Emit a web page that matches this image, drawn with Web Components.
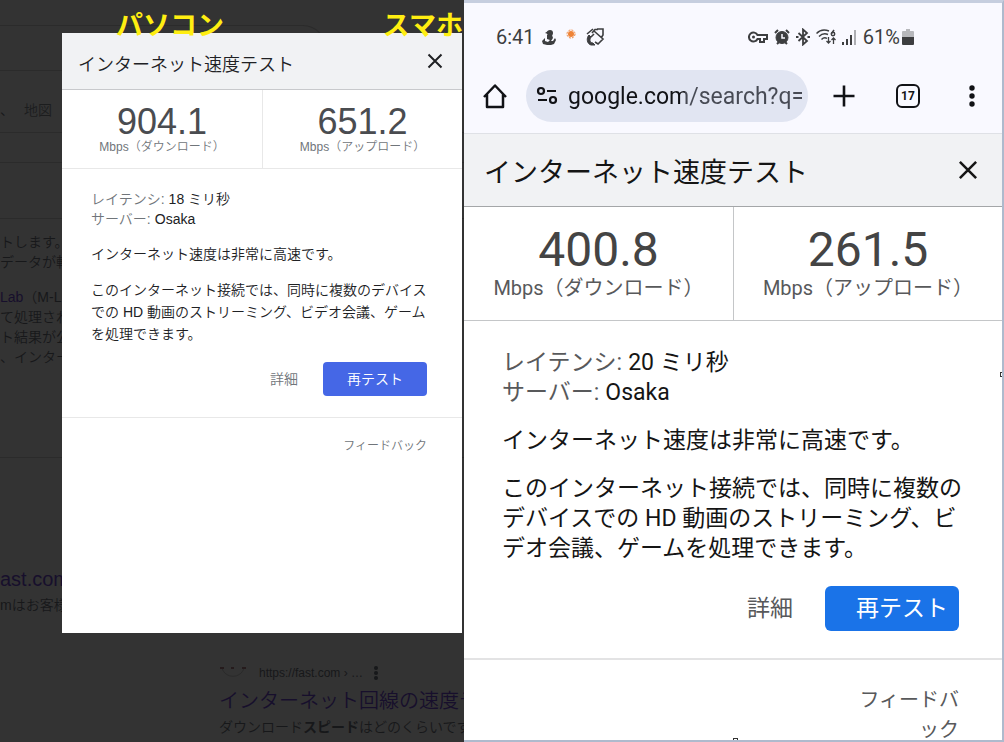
<!DOCTYPE html>
<html lang="ja">
<head>
<meta charset="utf-8">
<title>インターネット速度テスト</title>
<style>
  body {
    margin: 0;
    display: grid;
    grid-template-columns: 464fr 540fr;
    height: 100vh;
    overflow: hidden;
    background: #333333;
    font-family: "Liberation Sans", "Noto Sans CJK JP", sans-serif;
  }
</style>
</head>
<body>

<desktop-pane>
  <search-page slot="page"></search-page>
  <speed-panel slot="dialog" download="904.1" upload="651.2" latency="18"></speed-panel>
  <pane-caption slot="caption">パソコン</pane-caption>
  <pane-caption slot="caption" end>スマホ</pane-caption>
</desktop-pane>

<phone-pane>
  <status-bar slot="status"></status-bar>
  <browser-bar slot="toolbar" url="google.com/search?q=" tabs="17"></browser-bar>
  <speed-panel phone download="400.8" upload="261.5" latency="20"></speed-panel>
</phone-pane>

<script>
  const createTemplate = html => {
    const template = document.createElement('template');
    template.innerHTML = html;
    return template;
  };

  class BaseElement extends HTMLElement {
    constructor() {
      super();

      this._shadowRoot = this.attachShadow({ mode: 'open' });
      this._shadowRoot.appendChild(this.constructor.template.content.cloneNode(true));
    }
  }

  // Left half: dimmed search page with the dialog on top of it
  class DesktopPane extends BaseElement {
    static template = createTemplate(`
      <style>
        :host {
          display: block;
          position: relative;
          overflow: hidden;
          background: #333333;
        }

        .dialog {
          position: absolute;
          top: 33px;
          left: 62px;
          right: 2px;
          min-height: 600px;
          background: #ffffff;
        }
      </style>

      <slot name="page"></slot>
      <div class="dialog"><slot name="dialog"></slot></div>
      <slot name="caption"></slot>
    `);
  }

  // Yellow labels that float over the pane
  class PaneCaption extends BaseElement {
    static template = createTemplate(`
      <style>
        :host {
          position: absolute;
          top: 10px;
          left: 116px;
          font-size: 27px;
          line-height: 32px;
          font-weight: bold;
          white-space: nowrap;
          color: #ffee11;
        }

        :host([end]) {
          left: auto;
          right: 1px;
        }
      </style>

      <slot></slot>
    `);
  }

  class SearchPage extends BaseElement {
    static template = createTemplate(`
      <style>
        :host {
          display: block;
          font-size: 14px;
          line-height: 20px;
          font-weight: 350;
          white-space: nowrap;
          color: #17181a;
        }

        .search {
          width: 70%;
          height: 44px;
          margin-top: 25px;
          border: 1px solid #2b2b2b;
          border-left: 0;
          border-radius: 0 24px 24px 0;
        }

        nav {
          display: flex;
          gap: 10px;
          padding: 29px 0 12px;
          border-bottom: 1px solid #2b2b2b;
        }

        nav a {
          color: #1c1d1e;
        }

        .tools {
          height: 29px;
          border-bottom: 1px solid #2b2b2b;
        }

        .spacer {
          height: 55px;
          border-bottom: 1px solid #2b2b2b;
        }

        .answer {
          height: 225px;
          padding-top: 13px;
          border-bottom: 1px solid #2b2b2b;
        }

        p {
          margin: 0;
        }

        .answer p + p {
          margin-top: 15px;
        }

        a {
          color: #170f2c;
          text-decoration: none;
        }

        h3 {
          margin: 0 0 4px;
          font-size: 20px;
          line-height: 24px;
          font-weight: inherit;
        }

        .first {
          padding-top: 109px;
        }

        .second {
          padding: 49px 0 0 219px;
        }

        .source {
          display: flex;
          align-items: center;
          height: 18px;
          margin-bottom: 7px;
          font-size: 12px;
        }

        .source span {
          margin: 0 10px 0 12px;
        }
      </style>

      <div class="search"></div>
      <nav><span>、</span><a href="#maps">地図</a></nav>
      <div class="tools"></div>
      <div class="spacer"></div>
      <div class="answer">
        <p>トします。<br>データが転</p>
        <p><a href="#mlab">Lab</a>（M-L<br>て処理され<br>ト結果が公<br>、インター</p>
      </div>
      <div class="first">
        <h3><a href="#fast">ast.com</a></h3>
        <p>mはお客様</p>
      </div>
      <div class="second">
        <div class="source">
          <svg width="28" height="18" viewBox="0 0 28 18" fill="none">
            <path d="M3 4c3 11 19 11 22 0" stroke="#2a2a2a"/>
            <path d="M1 4h4M12 4h3M23 4h4" stroke="#251b1c" stroke-width="2"/>
          </svg>
          <span>https://fast.com › …</span>
          <svg width="6" height="14" viewBox="0 0 6 14" fill="#17181a">
            <circle cx="3" cy="2" r="2"/><circle cx="3" cy="7" r="2"/><circle cx="3" cy="12" r="2"/>
          </svg>
        </div>
        <h3><a href="#speed">インターネット回線の速度テ</a></h3>
        <p>ダウンロード<b>スピード</b>はどのくらいです</p>
      </div>
    `);
  }

  // The result card, shown at two scales. The phone attribute switches to the larger one.
  class SpeedPanel extends BaseElement {
    static template = createTemplate(`
      <style>
        :host {
          --title: 18px;
          --text: 14px;
          --small: 12px;
          --number: 36px;
          --text-line: 20px;
          --para-line: 22px;
          --para-gap: 14px;
          --label-color: #70757a;
          --line: #e8e8e8;
          display: block;
          color: #202124;
          font-weight: 350;
          background: #ffffff;
        }

        :host([phone]) {
          --title: 27px;
          --text: 23px;
          --small: 20px;
          --number: 48px;
          --text-line: 30px;
          --para-line: 30px;
          --para-gap: 18px;
          --label-color: #58595b;
          --line: #c4c6c8;
          color: #151515;
          font-weight: 400;
        }

        header {
          display: flex;
          align-items: center;
          justify-content: space-between;
          box-sizing: border-box;
          height: 57px;
          padding: 0 15px 0 16px;
          border-bottom: 1px solid #c8c9cc;
          background: #f1f2f4;
        }

        h2 {
          margin: 0;
          padding-top: 4px;
          font-size: var(--title);
          font-weight: inherit;
        }

        button {
          border: 0;
          padding: 0;
          background: none;
          font: inherit;
          color: inherit;
          cursor: pointer;
        }

        .close svg {
          display: block;
          width: 24px;
          height: 24px;
        }

        .metrics {
          display: grid;
          grid-template-columns: 1fr 1fr;
          border-bottom: 1px solid var(--line);
          text-align: center;
        }

        .metrics div {
          padding: 14px 0;
        }

        .metrics div + div {
          border-left: 1px solid var(--line);
        }

        .number {
          display: block;
          font-size: var(--number);
          line-height: 36px;
          font-weight: 400;
          color: #4a4c50;
        }

        .unit {
          display: block;
          font-size: var(--small);
          line-height: 14px;
          color: var(--label-color);
        }

        .body {
          padding: 20px 35px 21px 29px;
          border-bottom: 1px solid var(--line);
          font-size: var(--text);
          line-height: var(--text-line);
        }

        dl, dd, p {
          margin: 0;
        }

        dl div {
          display: flex;
          gap: 4px;
        }

        dt {
          color: var(--label-color);
        }

        p {
          margin-top: var(--para-gap);
          line-height: var(--para-line);
        }

        .actions {
          display: flex;
          justify-content: flex-end;
          gap: 25px;
          margin-top: 17px;
        }

        .details {
          color: var(--label-color);
        }

        .retest {
          width: 104px;
          height: 34px;
          border-radius: 4px;
          background: #4567e6;
          color: #ffffff;
        }

        footer {
          display: flex;
          justify-content: flex-end;
          padding: 18px 35px 18px 29px;
          font-size: var(--small);
          line-height: var(--text-line);
        }

        footer a {
          color: var(--label-color);
          text-align: right;
          text-decoration: none;
        }

        :host([phone]) header {
          height: 73px;
          padding: 0 19px 0 20px;
          border-color: #a4a6a8;
        }

        :host([phone]) h2 {
          padding-top: 0;
        }

        :host([phone]) .close svg {
          width: 30px;
          height: 30px;
        }

        :host([phone]) .metrics div {
          padding: 17px 0 20px;
        }

        :host([phone]) .number {
          line-height: 52px;
          color: #444444;
        }

        :host([phone]) .unit {
          line-height: 24px;
        }

        :host([phone]) .body {
          padding: 27px 40px 27px 38px;
          border-bottom: 2px solid #e3e3e4;
        }

        :host([phone]) dl div {
          gap: 6px;
        }

        :host([phone]) .actions {
          gap: 32px;
          margin-top: 22px;
          padding-right: 3px;
        }

        :host([phone]) .retest {
          width: 134px;
          height: 45px;
          padding-left: 20px;
          border-radius: 6px;
          background: #1a73e8;
        }

        :host([phone]) footer {
          padding: 25px 43px 25px 38px;
        }

        :host([phone]) footer a {
          width: 100px;
        }
      </style>

      <header>
        <h2>インターネット速度テスト</h2>
        <button class="close" aria-label="閉じる">
          <svg viewBox="0 0 24 24" fill="none" stroke="currentColor" stroke-width="2">
            <path d="M5.5 5.5l13 13M18.5 5.5l-13 13"/>
          </svg>
        </button>
      </header>
      <div class="metrics">
        <div><span class="number" id="download"></span><span class="unit">Mbps（ダウンロード）</span></div>
        <div><span class="number" id="upload"></span><span class="unit">Mbps（アップロード）</span></div>
      </div>
      <div class="body">
        <dl>
          <div><dt>レイテンシ:</dt><dd id="latency"></dd></div>
          <div><dt>サーバー:</dt><dd>Osaka</dd></div>
        </dl>
        <p>インターネット速度は非常に高速です。</p>
        <p>このインターネット接続では、同時に複数のデバイスでの HD 動画のストリーミング、ビデオ会議、ゲームを処理できます。</p>
        <div class="actions">
          <button class="details">詳細</button>
          <button class="retest">再テスト</button>
        </div>
      </div>
      <footer><a href="#feedback">フィードバック</a></footer>
    `);

    static get observedAttributes() {
      return ['download', 'upload', 'latency'];
    }

    attributeChangedCallback() {
      this.render();
    }

    render() {
      this._shadowRoot.querySelector('#download').textContent = this.getAttribute('download');
      this._shadowRoot.querySelector('#upload').textContent = this.getAttribute('upload');
      this._shadowRoot.querySelector('#latency').textContent = `${this.getAttribute('latency')} ミリ秒`;
    }
  }

  class PhonePane extends BaseElement {
    static template = createTemplate(`
      <style>
        :host {
          display: block;
          position: relative;
          overflow: hidden;
          box-sizing: border-box;
          height: 100vh;
          border: solid #aebacd;
          border-width: 3px 2px 2px 0;
          border-top-color: #c6cedf;
          background: #ffffff;
          font-family: Roboto, "Noto Sans CJK JP", sans-serif;
        }

        .chrome {
          border-bottom: 1px solid #dfe1e6;
          background: #f9f9ff;
        }

        /* resize handles on the edge of the frame */
        .handle {
          position: absolute;
          box-sizing: border-box;
          width: 5px;
          height: 5px;
          border: 1px solid #333333;
          background: #ffffff;
        }

        .bottom {
          left: 50%;
          bottom: -3px;
        }

        .right {
          top: 50%;
          right: -3px;
        }
      </style>

      <div class="chrome">
        <slot name="status"></slot>
        <slot name="toolbar"></slot>
      </div>
      <slot></slot>
      <span class="handle bottom"></span>
      <span class="handle right"></span>
    `);
  }

  class StatusBar extends BaseElement {
    static template = createTemplate(`
      <style>
        :host {
          display: flex;
          align-items: center;
          justify-content: space-between;
          height: 67px;
          padding: 0 88px 0 32px;
          font-size: 20px;
          color: #3d3e40;
        }

        div {
          display: flex;
          align-items: center;
          gap: 6px;
        }

        .battery {
          display: flex;
          align-items: center;
          gap: 2px;
        }

        svg {
          display: block;
        }
      </style>

      <div>
        <span>6:41</span>
        <svg width="16" height="16" viewBox="0 0 16 16" fill="currentColor">
          <circle cx="9" cy="4" r="3"/>
          <path d="M7 2L4 4l3 1zM6 6l5 0 1 3-2 3h2l2-3 1 2-2 4-3 1H6l-4-1-1-3 3-3v3l3 1 2-2-3-1z"/>
        </svg>
        <svg width="16" height="18" viewBox="0 0 16 18">
          <circle cx="8" cy="6" r="3" fill="#ef8336"/>
          <circle cx="8" cy="6" r="4" fill="none" stroke="#ef8336" stroke-dasharray="2 1.14"/>
        </svg>
        <svg width="20" height="20" viewBox="0 0 20 20" fill="none" stroke="currentColor" stroke-width="1.600">
          <path d="M2 7l6-5M7 6l3-3.500h3M9 4l9 8-5 5-3-2M12 2h6v6l-2 3"/>
          <path d="M4 8c-3 3-2 9 2 10h4l-2-2c-3 0-4-3-2-6z" fill="currentColor" stroke-width="1"/>
          <path d="M6 10l3-3"/>
        </svg>
      </div>
      <div>
        <svg width="20" height="14" viewBox="0 0 20 14" fill="none" stroke="currentColor" stroke-width="2">
          <path d="M9.500 5A4.500 4.500 0 1 0 9.500 9H12v3h4V9h3V5z"/>
          <circle cx="5.500" cy="7" r="1.500" fill="currentColor" stroke="none"/>
        </svg>
        <svg width="16" height="16" viewBox="0 0 16 16" fill="none" stroke="currentColor">
          <circle cx="8" cy="8.500" r="6" fill="currentColor"/>
          <path d="M1 4l3-3M15 4l-3-3M3 15l2-2M13 15l-2-2" stroke-width="2"/>
          <path d="M8 5v4h3" stroke="#f9f9ff" stroke-width="1.500"/>
        </svg>
        <svg width="14" height="18" viewBox="0 0 14 18" fill="none" stroke="currentColor" stroke-width="1.800">
          <path d="M2.500 5l8.500 8-4 3.500v-15L11 5l-8.500 8M0 9h2.500M11.500 9H14"/>
        </svg>
        <svg width="20" height="16" viewBox="0 0 20 16" fill="none" stroke="currentColor" stroke-width="1.500">
          <path d="M.5 4.500C4 .8 9 .5 13 2M3 7.500c3-3 6-3.300 9-2M5.500 10.500c2-2 4-2 5.500-1"/>
          <path d="M12.500 8v6M10.500 12l2 2 2-2M17.500 15V9M15.500 11l2-2 2 2" stroke-width="1.300"/>
          <circle cx="17" cy="5" r="1.700"/><path d="M15.500 4.500L18 1"/>
        </svg>
        <svg width="15" height="16" viewBox="0 0 15 16" fill="currentColor">
          <path d="M0 13h2v3H0zM4 10h2v6H4zM8 6h2v10H8z"/>
          <path d="M12 1h2v15h-2z" opacity="0.4"/>
        </svg>
        <span class="battery">
          <span>61%</span>
          <svg width="12" height="16" viewBox="0 0 12 16" fill="currentColor">
            <path d="M4 0h4v2h3a1 1 0 0 1 1 1v5H0V3a1 1 0 0 1 1-1h3z" opacity="0.35"/>
            <path d="M0 8h12v7a1 1 0 0 1-1 1H1a1 1 0 0 1-1-1z"/>
          </svg>
        </span>
      </div>
    `);
  }

  class BrowserBar extends BaseElement {
    static template = createTemplate(`
      <style>
        :host {
          display: flex;
          align-items: center;
          padding: 0 16px 11px 16px;
        }

        button {
          display: block;
          border: 0;
          padding: 0;
          background: none;
          color: #111216;
        }

        svg {
          display: block;
        }

        .omnibox {
          display: flex;
          flex: 1;
          align-items: center;
          gap: 10px;
          box-sizing: border-box;
          height: 52px;
          min-width: 0;
          margin: 0 22px 0 16px;
          padding: 0 6px 0 10px;
          border-radius: 26px;
          background: #e1e5f2;
          color: #111216;
        }

        /* host name is darker than the path */
        input {
          flex: 1;
          min-width: 0;
          height: 36px;
          border: 0;
          padding: 0;
          outline: none;
          font-family: inherit;
          font-size: 23px;
          color: transparent;
          background: linear-gradient(90deg, #111216 117px, #474a54 117px);
          -webkit-background-clip: text;
          background-clip: text;
        }

        .buttons {
          display: flex;
          align-items: center;
          gap: 38px;
        }

        .tabs {
          box-sizing: border-box;
          width: 24px;
          height: 24px;
          border: 2px solid #111216;
          border-radius: 6px;
          font-family: inherit;
          font-size: 12px;
          font-weight: bold;
          line-height: 20px;
        }
      </style>

      <button aria-label="ホーム">
        <svg width="30" height="30" viewBox="0 0 30 30" fill="none" stroke="currentColor" stroke-width="2.500" stroke-linejoin="round">
          <path d="M4 16L15 4.500 26 16M7 13.500V26h16V13.500"/>
        </svg>
      </button>
      <label class="omnibox">
        <svg width="22" height="20" viewBox="0 0 22 20" fill="none" stroke="currentColor" stroke-width="2.200">
          <circle cx="5" cy="5" r="3"/><path d="M11 5h9M2 14h9"/><circle cx="17" cy="14" r="3"/>
        </svg>
        <input type="text" aria-label="アドレス">
      </label>
      <div class="buttons">
        <button aria-label="新しいタブ">
          <svg width="28" height="28" viewBox="0 0 28 28" stroke="currentColor" stroke-width="2.600">
            <path d="M14 3.500v21M3.500 14h21"/>
          </svg>
        </button>
        <button class="tabs"></button>
        <button aria-label="メニュー">
          <svg width="28" height="26" viewBox="0 0 28 26" fill="currentColor">
            <circle cx="14" cy="5" r="2.700"/><circle cx="14" cy="13" r="2.700"/><circle cx="14" cy="21" r="2.700"/>
          </svg>
        </button>
      </div>
    `);

    connectedCallback() {
      this._shadowRoot.querySelector('input').value = this.getAttribute('url');
      this._shadowRoot.querySelector('.tabs').textContent = this.getAttribute('tabs');
    }
  }

  window.customElements.define('desktop-pane', DesktopPane);
  window.customElements.define('pane-caption', PaneCaption);
  window.customElements.define('search-page', SearchPage);
  window.customElements.define('speed-panel', SpeedPanel);
  window.customElements.define('phone-pane', PhonePane);
  window.customElements.define('status-bar', StatusBar);
  window.customElements.define('browser-bar', BrowserBar);
</script>
</body>
</html>
